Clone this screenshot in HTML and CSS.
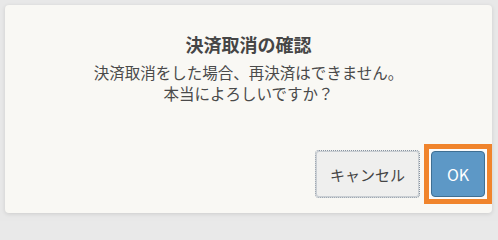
FILE: index.html
```html
<!DOCTYPE html>
<html lang="ja">
<head>
<meta charset="utf-8">
<link rel="stylesheet" href="styles.css">
</head>
<body>
<div class="backdrop">
  <div class="dialog">
    <h1 class="title">決済取消の確認</h1>
    <p class="message">決済取消をした場合、再決済はできません。<br>本当によろしいですか？</p>
    <div class="actions">
      <button class="btn btn-cancel">キャンセル</button>
      <span class="focus-ring"><button class="btn btn-ok">OK</button></span>
    </div>
  </div>
</div>
</body>
</html>
```

FILE: styles.css
```css
html, body {
  margin: 0;
  padding: 0;
  background: #e9e9e9;
}
.backdrop {
  width: 498px;
  height: 221px;
  padding: 5px 6px 8px 5px;
  box-sizing: border-box;
  background: #e8e8e8;
}
.dialog {
  width: 487px;
  height: 208px;
  box-sizing: border-box;
  background: #f9f8f4;
  border-radius: 4px;
  box-shadow: 0 1px 4px rgba(0,0,0,0.12);
  padding: 27px 0 0 0;
  display: flex;
  flex-direction: column;
  font-family: "Noto Sans CJK JP", "Noto Sans", sans-serif;
  color: #4a4a4a;
}
.title {
  margin: 0;
  font-size: 18px;
  line-height: 24px;
  font-weight: bold;
  text-align: center;
  color: #454545;
}
.message {
  margin: 6px 0 0;
  font-size: 15.5px;
  line-height: 21px;
  text-align: center;
  color: #4a4a4a;
}
.actions {
  margin-top: 40px;
  display: flex;
  justify-content: flex-end;
  align-items: center;
  gap: 4px;
}
.btn {
  font-family: "Noto Sans CJK JP", "Noto Sans", sans-serif;
  box-sizing: border-box;
  border-radius: 4px;
  cursor: pointer;
}
.btn-cancel {
  width: 105px;
  height: 48px;
  background: #efefee;
  border: 1px dotted #8793a0;
  box-shadow: inset 0 0 0 1px #c9ced3;
  font-size: 15px;
  color: #454545;
}
.focus-ring {
  display: flex;
  border: 5px solid #f0842c;
  padding: 2px;
  background: #fbfbfb;
}
.btn-ok {
  width: 54px;
  height: 46px;
  background: #5d98c6;
  border: 1px solid #3f6f93;
  color: #ffffff;
  font-size: 16px;
  display: block;
}
```
